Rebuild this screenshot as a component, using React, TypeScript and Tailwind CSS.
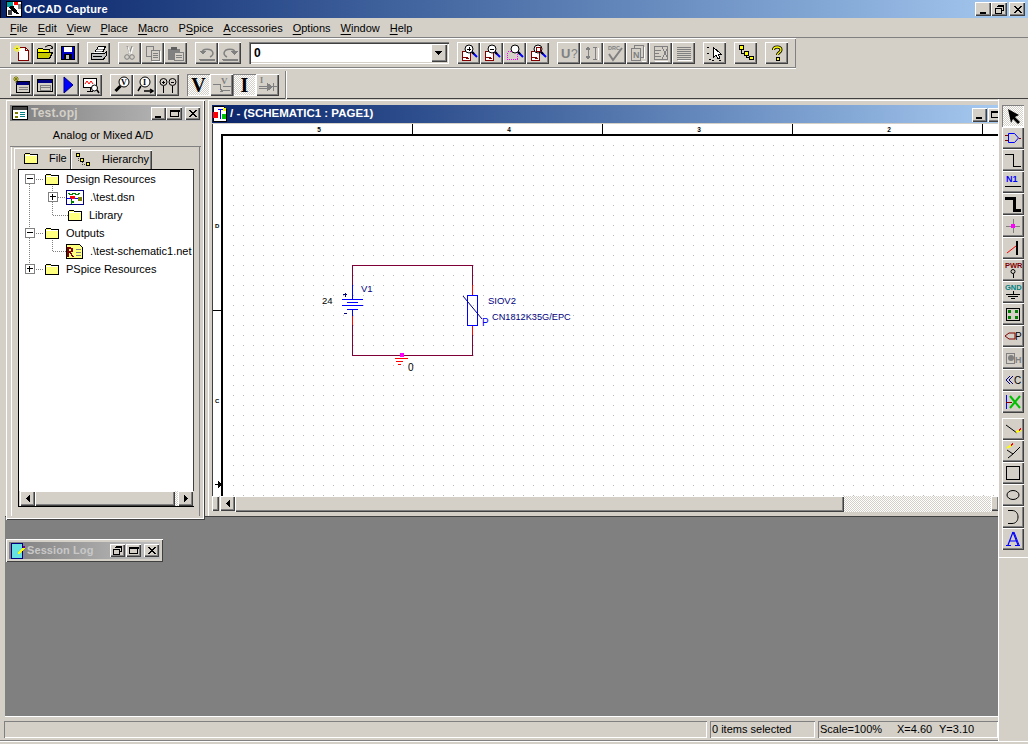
import React from "react";

const RAISED = "shadow-[inset_1px_1px_0_#ffffff,inset_-1px_-1px_0_#404040,inset_-2px_-2px_0_#808080]";
const DITHER = "bg-[repeating-conic-gradient(#ffffff_0_25%,#d4d0c8_0_50%)] bg-size-[2px_2px]";

function S({ children, size = 18 }: { children: React.ReactNode; size?: number }) {
  return (
    <svg width={size} height={size} viewBox="0 0 18 18" shapeRendering="crispEdges" fill="none">
      {children}
    </svg>
  );
}

const T = ({ x, y, s = 8, c = "#000", w = 700, f = "Liberation Sans", a = "start", children }: any) => (
  <text x={x} y={y} fontSize={s} fill={c} fontWeight={w} fontFamily={f} textAnchor={a}>
    {children}
  </text>
);

const Lens = ({ x = 7, y = 3, c = "#fff" }: any) => (
  <g>
    <circle cx={x + 4} cy={y + 4} r={4} fill={c} stroke="#000" shapeRendering="auto" />
    <path d={`M${x + 7} ${y + 7}l5 5`} stroke="#0000ff" strokeWidth={2} shapeRendering="auto" />
    <path d={`M${x + 7} ${y + 7}l2 2`} stroke="#000" strokeWidth={2} shapeRendering="auto" />
  </g>
);

const ZoomPage = ({ children }: any) => (
  <S>
    <path d="M2.5 7.5h8v9h-8z" fill="#fff" stroke="#800000" strokeWidth={1.5} />
    <path d="M3 13h5M6 14h3" stroke="#800000" />
    {children}
  </S>
);

const icons: Record<string, React.ReactNode> = {
  new: (
    <S>
      <path d="M6.5 3.5h6l3 3v10h-10v-9" fill="#fff" stroke="#800000" />
      <path d="M12.5 3.5v3h3" stroke="#800000" />
      <path d="M4 1v7M0.5 4.5h7M1.5 2l5 5M6.5 2l-5 5" stroke="#ffff00" strokeWidth={1} shapeRendering="auto" />
      <path d="M3 4h2v1H3z" fill="#808000" />
    </S>
  ),
  open: (
    <S>
      <path d="M1.5 5.5l1-1h4l1 1h6v3h-12z" fill="#ffff00" stroke="#000" />
      <path d="M1.5 14.5v-6h13l2 0-3 6z" fill="#c8c800" stroke="#000" />
      <path d="M9 3l3-1.5 3 0 1.5 2.5M16.5 2.5v2h-2" stroke="#000" shapeRendering="auto" />
    </S>
  ),
  save: (
    <S>
      <path d="M2.5 2.5h13v13h-13z" fill="#0000c0" stroke="#000" />
      <path d="M5 3h8v5H5z" fill="#fff" />
      <path d="M5 10h8v5H5z" fill="#000" />
      <path d="M7 11h3v4H7z" fill="#c0c0c0" />
    </S>
  ),
  print: (
    <S>
      <path d="M4.5 8.5l4-6h7l-3 6" fill="#fff" stroke="#000" />
      <path d="M7 5h6M6 7h6" stroke="#808080" />
      <path d="M1.5 9.5h13l2-2v4l-3 3.500h-12z" fill="#c0c0c0" stroke="#000" />
      <path d="M3 12h9" stroke="#000" />
    </S>
  ),
  cut: (
    <S>
      <path d="M6 2l3 8M11 2l-3 8" stroke="#808080" shapeRendering="auto" />
      <circle cx={6} cy={13} r={2.3} stroke="#808080" shapeRendering="auto" />
      <circle cx={11} cy={13} r={2.3} stroke="#808080" shapeRendering="auto" />
      <path d="M7 3l2 7M12 3l-2 7" stroke="#fff" shapeRendering="auto" />
    </S>
  ),
  copy: (
    <S>
      <path d="M2.500 2.500h7v10h-7z" stroke="#808080" />
      <path d="M7.500 6.500h8v10h-8z" fill="#d4d0c8" stroke="#808080" />
      <path d="M9 9h5M9 11h5M9 13h5" stroke="#808080" />
      <path d="M16.500 7v10H8" stroke="#fff" />
    </S>
  ),
  paste: (
    <S>
      <path d="M1 5h12v11H1z" fill="#808080" />
      <path d="M4 3h6v3H4z" fill="#606060" />
      <path d="M7.500 8.500h9v8h-9z" fill="#d4d0c8" stroke="#808080" />
      <path d="M9 11h6M9 13h6" stroke="#808080" />
    </S>
  ),
  undo: (
    <S>
      <path d="M1 15h16M2 16h15" stroke="#808080" />
      <path d="M4 9c0-5 10-5 11 0 0 1-1 3-3 4" stroke="#808080" strokeWidth={1.4} shapeRendering="auto" />
      <path d="M1 7l4 4 3-4z" fill="#808080" />
    </S>
  ),
  redo: (
    <S>
      <path d="M1 15h16M2 16h15" stroke="#808080" />
      <path d="M14 9c0-5-10-5-11 0 0 1 1 3 3 4" stroke="#808080" strokeWidth={1.4} shapeRendering="auto" />
      <path d="M17 7l-4 4-3-4z" fill="#808080" />
    </S>
  ),
  zin: (
    <ZoomPage>
      <Lens x={5} y={1} />
      <path d="M7 5h4M9 3v4" stroke="#000" />
    </ZoomPage>
  ),
  zout: (
    <ZoomPage>
      <Lens x={5} y={1} />
      <path d="M7 5h4" stroke="#000" />
    </ZoomPage>
  ),
  zarea: (
    <S>
      <path d="M1.500 7.500h10v8h-10z" stroke="#ff00ff" strokeDasharray="1 1" />
      <Lens x={5} y={1} />
    </S>
  ),
  zall: (
    <ZoomPage>
      <Lens x={5} y={1} />
      <path d="M7 3h4v4H7z" stroke="#800000" />
    </ZoomPage>
  ),
  u: (
    <S>
      <T x={1} y={14} s={13} c="#808080">U</T>
      <T x={11} y={14} s={12} c="#808080" w={400}>?</T>
    </S>
  ),
  arrows: (
    <S>
      <path d="M5 4v10M3 6l2-3 2 3M3 12l2 3 2-3z" stroke="#808080" fill="#808080" />
      <path d="M10 3h4M12 3v12M10 15h4" stroke="#808080" />
      <path d="M15 4v12" stroke="#fff" />
    </S>
  ),
  drc: (
    <S>
      <T x={2} y={6} s={5.500} c="#808080">DRC</T>
      <path d="M3 10l4 6 9-12" stroke="#808080" strokeWidth={2} shapeRendering="auto" />
    </S>
  ),
  net: (
    <S>
      <path d="M5.500 1.500h9v12h-9z" stroke="#808080" />
      <path d="M2.500 4.500h9v12h-9z" fill="#d4d0c8" stroke="#808080" />
      <T x={4} y={14} s={9} c="#808080">N</T>
      <path d="M15.500 3v12M12.500 17h4" stroke="#fff" />
    </S>
  ),
  xl: (
    <S>
      <path d="M2.500 2.500h13v13h-13z" stroke="#808080" />
      <path d="M3 6h6M3 9h4M3 12h6M10 3l6 12M16 3l-6 12" stroke="#808080" />
      <path d="M3 17h13" stroke="#fff" />
    </S>
  ),
  list: (
    <S>
      <path d="M2 3h14M2 5h14M2 7h14M2 9h14M2 11h14M2 13h14M2 15h14" stroke="#808080" />
      <path d="M3 16h14" stroke="#fff" />
    </S>
  ),
  sel: (
    <S>
      <path d="M7.500 3.500v10l2.500-2.500 2 4 2-1-2-4h3z" fill="#fff" stroke="#000" />
      <path d="M1 3h2M1 9h2M3 15h2M6 16h2M13 16h2" stroke="#000" />
    </S>
  ),
  tree: (
    <S>
      <path d="M4 4v5h5M9 9v4h5" stroke="#000" />
      <path d="M2.500 1.500h4v4h-4zM7.500 7.500h4v4h-4zM12.500 12.500h4v3h-4z" fill="#ffff00" stroke="#000" />
    </S>
  ),
  help: (
    <S>
      <path d="M5.500 6c0-4 7.500-4 7.500 0 0 2.500-3.500 2.500-3.500 5" stroke="#000" strokeWidth={3} shapeRendering="auto" />
      <path d="M5.500 6c0-4 7.500-4 7.500 0 0 2.500-3.500 2.500-3.500 5" stroke="#ffff00" strokeWidth={1.300} shapeRendering="auto" />
      <path d="M8 13.500h3v3H8z" fill="#ffff00" stroke="#000" />
    </S>
  ),
  win1: (
    <S>
      <path d="M3.500 5.500h13v11h-13z" fill="#d4d0c8" stroke="#000" />
      <path d="M4 6h12v3H4z" fill="#000080" />
      <path d="M6 11h9M6 13h9" stroke="#808080" />
      <path d="M3 0v7M0 3h6M1 1l4 4M5 1l-4 4" stroke="#808000" shapeRendering="auto" />
    </S>
  ),
  win2: (
    <S>
      <path d="M1.500 3.500h15v12h-15z" fill="#d4d0c8" stroke="#000" />
      <path d="M2 4h14v3H2z" fill="#000080" />
      <path d="M4 9h10v5H4z" stroke="#808080" />
      <path d="M4 11h10" stroke="#808080" />
    </S>
  ),
  run: (
    <S>
      <path d="M5 1l9 8-9 8z" fill="#0000ff" stroke="#000080" shapeRendering="auto" />
    </S>
  ),
  probe: (
    <S>
      <path d="M1.500 2.500h13v9h-13z" fill="#fff" stroke="#000" />
      <path d="M3 8l2-3 2 3 2-3 2 3" stroke="#ff0000" shapeRendering="auto" />
      <path d="M8 11v4M5 15h6" stroke="#000" />
      <circle cx={12.500} cy={12} r={3} fill="#fff" stroke="#000" shapeRendering="auto" />
      <path d="M15 14l2 3" stroke="#000" strokeWidth={1.500} shapeRendering="auto" />
    </S>
  ),
  vmark: (
    <S>
      <circle cx={11} cy={6} r={5} fill="#fff" stroke="#000" shapeRendering="auto" />
      <T x={8} y={9} s={8} f="Liberation Serif">V</T>
      <path d="M7.500 10l-5 5" stroke="#000" strokeWidth={3} shapeRendering="auto" />
    </S>
  ),
  imark: (
    <S>
      <circle cx={9} cy={6} r={5} fill="#fff" stroke="#000" shapeRendering="auto" />
      <T x={7} y={9} s={8} f="Liberation Serif">I</T>
      <path d="M5 10l-3 5M8 15h8M14 13l3 2-3 2" stroke="#000" strokeWidth={1.500} shapeRendering="auto" />
    </S>
  ),
  diff: (
    <S>
      <circle cx={4.500} cy={6} r={3.500} stroke="#000" shapeRendering="auto" />
      <circle cx={13.500} cy={6} r={3.500} stroke="#000" shapeRendering="auto" />
      <path d="M3 6h3M4.500 4.500v3M12 6h3M4.500 10v7M13.500 10v7" stroke="#000" />
    </S>
  ),
  V: (
    <span className="text-[20px] font-bold leading-none font-['Liberation_Serif',serif] text-black">V</span>
  ),
  Vd: (
    <S>
      <T x={8} y={8} s={9} c="#808080" f="Liberation Serif">V</T>
      <path d="M0 8h7v5h2M7 8v6M10 10h8M9 14h8" stroke="#808080" />
      <path d="M6 16h4l-2-2z" fill="#808080" />
    </S>
  ),
  I: (
    <span className="text-[20px] font-bold leading-none font-['Liberation_Serif',serif] text-black">I</span>
  ),
  Id: (
    <S>
      <T x={1} y={7} s={8} c="#808080" f="Liberation Serif">I</T>
      <path d="M0 10h18M0 12h8" stroke="#808080" />
      <path d="M8 7l5 4-5 4zM14 7v8" fill="#808080" stroke="#808080" />
    </S>
  ),
  pointer: (
    <S>
      <path d="M4 2l11 6-4 2 5 5-2 2-5-5-2 4z" fill="#000" shapeRendering="auto" />
    </S>
  ),
  part: (
    <S>
      <path d="M4.500 4.500h6l4 4.500-4 4.500h-6z" stroke="#0000ff" shapeRendering="auto" />
      <path d="M1 6.500h3M1 11.500h3M14.500 9H17" stroke="#800000" />
    </S>
  ),
  wire: (
    <S>
      <path d="M1 3.500h8.500v12H17" stroke="#000" />
    </S>
  ),
  n1: (
    <S>
      <T x={2} y={9} s={9} c="#0000ff">N1</T>
      <path d="M1 13h16" stroke="#000" />
    </S>
  ),
  bus: (
    <S>
      <path d="M1 3h9v12h7" stroke="#000" strokeWidth={3} />
    </S>
  ),
  junction: (
    <S>
      <path d="M2 9h14M9 2v14" stroke="#808080" />
      <path d="M7 7h4v4H7z" fill="#ff00ff" />
    </S>
  ),
  entry: (
    <S>
      <path d="M13 2v14" stroke="#000" strokeWidth={2} />
      <path d="M3 14l9-7" stroke="#ff0000" shapeRendering="auto" />
    </S>
  ),
  pwr: (
    <S>
      <T x={1} y={7} s={7.500} c="#800000">PWR</T>
      <circle cx={9} cy={10.500} r={2} stroke="#000" shapeRendering="auto" />
      <path d="M9 13v4" stroke="#000" />
    </S>
  ),
  gnd: (
    <S>
      <T x={1} y={7} s={7.500} c="#008080">GND</T>
      <path d="M9 8v3M2 11h14M4 13h10M7 15h4" stroke="#000" />
    </S>
  ),
  block: (
    <S>
      <path d="M2.500 3.500h13v12h-13z" stroke="#000" />
      <path d="M4 5h3v3H4zM11 5h3v3h-3zM4 11h3v3H4zM11 11h3v3h-3z" fill="#008000" />
    </S>
  ),
  port: (
    <S>
      <path d="M1 9l4-3h6v6H5z" stroke="#800000" shapeRendering="auto" />
      <T x={11} y={13} s={10} c="#000" w={400}>P</T>
    </S>
  ),
  hier: (
    <S>
      <path d="M2 4h8v10H2z" stroke="#808080" />
      <circle cx={7} cy={9} r={3} fill="#808080" shapeRendering="auto" />
      <T x={11} y={14} s={9} c="#808080">H</T>
    </S>
  ),
  offpage: (
    <S>
      <path d="M6 5L2 9l4 4M9 5L5 9l4 4" stroke="#000080" shapeRendering="auto" />
      <T x={10} y={13} s={10} c="#000" w={400}>C</T>
    </S>
  ),
  nc: (
    <S>
      <path d="M2 2v14" stroke="#0000ff" />
      <path d="M2 9h6" stroke="#800000" />
      <path d="M6 3l10 12M16 3L6 15" stroke="#00c000" strokeWidth={2} shapeRendering="auto" />
    </S>
  ),
  line: (
    <S>
      <path d="M2 5l11 8" stroke="#000" shapeRendering="auto" />
      <path d="M12 12l5-2" stroke="#ffff00" strokeWidth={2} shapeRendering="auto" />
      <path d="M15 10l2-1" stroke="#ff0000" strokeWidth={2} />
    </S>
  ),
  poly: (
    <S>
      <path d="M3 8l6 4-5 4M9 12l7-7" stroke="#000" shapeRendering="auto" />
      <path d="M3 6l5-3" stroke="#ffff00" strokeWidth={2} shapeRendering="auto" />
      <path d="M7 3l2-1" stroke="#ff0000" strokeWidth={2} />
    </S>
  ),
  rect: (
    <S>
      <path d="M2.500 2.500h13v13h-13z" stroke="#000" />
    </S>
  ),
  ellipse: (
    <S>
      <ellipse cx={9} cy={9} rx={6} ry={4.500} stroke="#000" shapeRendering="auto" />
    </S>
  ),
  arc: (
    <S>
      <path d="M4 2.500h4c4 0 6 3 6 6.500s-2 6.500-6 6.500H4" stroke="#000" shapeRendering="auto" />
    </S>
  ),
  A: (
    <S>
      <path d="M9 2l-5 13M9 2l5 13M6 11h6M2 15.500h5M11 15.500h5" stroke="#0000ff" strokeWidth={1.200} shapeRendering="auto" />
      <path d="M10 2l5 13" stroke="#0000ff" shapeRendering="auto" />
    </S>
  ),
};

function Btn({ i, checked, w = "w-[23px]" }: { i: string; checked?: boolean; w?: string }) {
  return (
    <div
      className={
        w +
        " h-[22px] flex items-center justify-center shrink-0 " +
        (checked ? "shadow-[inset_1px_1px_0_#808080,inset_-1px_-1px_0_#ffffff] " + DITHER : RAISED)
      }
    >
      {icons[i]}
    </div>
  );
}

function Group({ items, checked = [] }: { items: string[]; checked?: string[] }) {
  return (
    <div className="flex">
      {items.map((k) => (
        <Btn key={k} i={k} checked={checked.includes(k)} />
      ))}
    </div>
  );
}

function Menu({ label, u = 0 }: { label: string; u?: number }) {
  return (
    <span>
      {label.slice(0, u)}
      <span className="underline underline-offset-2">{label[u]}</span>
      {label.slice(u + 1)}
    </span>
  );
}

function CapBtn({ kind, w = "w-[15px]", h = "h-[13px]" }: { kind: string; w?: string; h?: string }) {
  return (
    <div className={w + " " + h + " flex items-center justify-center bg-[#d4d0c8] shrink-0 " + RAISED}>
      <svg width="11" height="9" viewBox="0 0 11 9" shapeRendering="crispEdges" fill="none">
        {kind === "min" && <path d="M2 7h6v1.500H2z" fill="#000" />}
        {kind === "max" && <path d="M1.500 1.500h8v6h-8zM1 1h9v1H1z" stroke="#000" />}
        {kind === "close" && <path d="M2 1l7 7M3 1l7 7M9 1L2 8M10 1L3 8" stroke="#000" shapeRendering="auto" />}
        {kind === "restore" && <path d="M3.500 .5h6v5h-2M1.500 3.500h6v5h-6zM3 1h7M1 3h7" stroke="#000" />}
      </svg>
    </div>
  );
}

function Folder() {
  return (
    <svg width="16" height="13" viewBox="0 0 16 13" shapeRendering="crispEdges" className="shrink-0">
      <path d="M1.500 2.500l1-1.500h4l1 1.500h7v9h-13z" fill="#ffff80" stroke="#000" />
      <path d="M2 3h12" stroke="#fff" />
    </svg>
  );
}

function TreeBox({ plus }: { plus?: boolean }) {
  return (
    <svg width="10" height="10" viewBox="0 0 10 10" shapeRendering="crispEdges" className="shrink-0 bg-white">
      <path d="M.5.5h9v9h-9z" stroke="#808080" fill="#fff" />
      <path d="M2 4.500h6" stroke="#000" />
      {plus && <path d="M4.500 2v6" stroke="#000" />}
    </svg>
  );
}

function ScrollArrow({ dir }: { dir: "l" | "r" }) {
  return (
    <div className={"w-[15px] h-[15px] flex items-center justify-center shrink-0 " + RAISED}>
      <svg width="6" height="9" viewBox="0 0 6 9" shapeRendering="crispEdges">
        <path d={dir === "l" ? "M5 0v9L1 4.500z" : "M1 0v9l4-4.500z"} fill="#000" />
      </svg>
    </div>
  );
}

function ProjectWindow() {
  return (
    <div className="w-[199px] h-[420px] shrink-0 z-10 bg-[#d4d0c8] flex flex-col px-[4px] pt-[5px] pb-[4px] shadow-[inset_1px_1px_0_#ffffff,inset_-1px_-1px_0_#404040,inset_-2px_-2px_0_#ffffff]">
      <div className="h-[16px] flex items-center bg-linear-to-r from-[#808080] to-[#c0c0c0] shrink-0">
        <svg width="16" height="14" viewBox="0 0 16 14" shapeRendering="crispEdges" className="ml-[2px] shrink-0">
          <path d="M.5.5h15v13H.5z" fill="#fff" stroke="#000" />
          <path d="M1 1h14v3H1z" fill="#404040" />
          <path d="M3 6h3v2H3zM3 10h3v2H3z" fill="#808000" />
          <path d="M8 6h5M8 8h5M8 10h5" stroke="#008080" />
        </svg>
        <span className="ml-[3px] text-[12px] font-bold text-[#d4d0c8] flex-1 tracking-[0.2px]">Test.opj</span>
        <CapBtn kind="min" />
        <CapBtn kind="max" w="w-[16px]" />
        <div className="w-[3px]" />
        <CapBtn kind="close" />
        <div className="w-[1px]" />
      </div>
      <div className="h-[23px] flex items-center justify-center text-[11px] text-black shrink-0 mt-[3px] pr-[5px] shadow-[inset_0_-1px_0_#808080]">
        Analog or Mixed A/D
      </div>
      <div className="flex-1 min-h-0 flex flex-col mx-[1px] shadow-[inset_-1px_0_0_#808080,inset_1px_0_0_#ffffff]">
        <div className="h-[22px] flex items-end pl-[3px] shrink-0">
          <div className="w-[57px] h-[21px] flex items-center pl-[9px] gap-[10px] text-[11px] shadow-[inset_1px_1px_0_#ffffff,inset_-1px_0_0_#404040]">
            <Folder />
            <span>File</span>
          </div>
          <div className="w-[81px] h-[19px] flex items-center pl-[5px] gap-[10px] text-[11px] shadow-[inset_1px_1px_0_#ffffff,inset_-1px_0_0_#404040,inset_-2px_0_0_#808080]">
            <svg width="16" height="13" viewBox="0 0 16 13" shapeRendering="crispEdges" className="shrink-0">
              <path d="M2 3v4h4M6 7v4h4" stroke="#404040" strokeDasharray="1 1" fill="none" />
              <path d="M.5.5h3v3h-3zM4.500 5.500h3v3h-3zM10.500 9.500h3v3h-3z" fill="#ffff00" stroke="#000" />
            </svg>
            <span>Hierarchy</span>
          </div>
        </div>
        <div className="relative flex-1 min-h-0 ml-[7px] mr-[6px] mb-[9px] bg-white border-t border-l border-b border-black shadow-[inset_-1px_0_0_#404040] flex flex-col overflow-hidden">
          <svg width="175" height="110" className="absolute left-0 top-0" shapeRendering="crispEdges" fill="none">
            <path
              d="M10.500 14v80M15 9.500h10M15 63.500h10M15 99.500h10M33.500 14v31M39 27.500h8M33.500 45.500h15M33.500 68v13.500h14"
              stroke="#808080"
              strokeDasharray="1 1"
            />
          </svg>
          <div className="flex-1 min-h-0 text-[11px] text-black relative overflow-hidden whitespace-nowrap">
            <div className="flex items-center h-[18px] pl-[6px]">
              <TreeBox />
              <div className="w-[9px]" />
              <Folder />
              <span className="ml-[6px]">Design Resources</span>
            </div>
            <div className="flex items-center h-[18px] pl-[29px]">
              <TreeBox plus />
              <div className="w-[8px]" />
              <svg width="18" height="15" viewBox="0 0 18 15" shapeRendering="crispEdges" className="shrink-0">
                <path d="M.5.5h17v14H.5z" fill="#fff" stroke="#000080" />
                <path d="M2 3l3 2 3-2 3 2 3-2" stroke="#008000" fill="none" />
                <path d="M4 6h5v3H4z" fill="#ff0000" />
                <path d="M1 8h4M9 8h4M5 9v4" stroke="#0000ff" />
                <path d="M12 7h4v4h-4z" fill="#808000" />
                <path d="M5 10v4l4-2z" fill="#008000" />
              </svg>
              <span className="ml-[6px]">.\test.dsn</span>
            </div>
            <div className="flex items-center h-[18px] pl-[48px]">
              <Folder />
              <span className="ml-[6px]">Library</span>
            </div>
            <div className="flex items-center h-[18px] pl-[6px]">
              <TreeBox />
              <div className="w-[9px]" />
              <Folder />
              <span className="ml-[6px]">Outputs</span>
            </div>
            <div className="flex items-center h-[18px] pl-[47px]">
              <svg width="18" height="15" viewBox="0 0 18 15" shapeRendering="crispEdges" className="shrink-0">
                <path d="M.5.5h13l3 3v11H.5z" fill="#ffff80" stroke="#000" />
                <path d="M2 4h2c3 0 3 4 0 4h-2zM2 4v9M4 8l3 5" stroke="#800000" strokeWidth={1.500} fill="none" />
                <path d="M10 5h5M10 8h5M10 11h5" stroke="#808080" />
              </svg>
              <span className="ml-[6px]">.\test-schematic1.net</span>
            </div>
            <div className="flex items-center h-[18px] pl-[6px]">
              <TreeBox plus />
              <div className="w-[9px]" />
              <Folder />
              <span className="ml-[6px]">PSpice Resources</span>
            </div>
          </div>
          <div className="h-[15px] flex shrink-0 bg-[#d4d0c8] px-[1px]">
            <ScrollArrow dir="l" />
            <div className={"w-[140px] h-[15px] shrink-0 " + RAISED} />
            <div className={"flex-1 " + DITHER} />
            <ScrollArrow dir="r" />
          </div>
        </div>
      </div>
    </div>
  );
}

function Schematic() {
  const wire = "#7f0037";
  const blue = "#0000ff";
  const red = "#ff0000";
  const dots = "dotgrid";
  return (
    <svg width="786" height="372" viewBox="212 124 786 372" className="block shrink-0" shapeRendering="crispEdges" fill="none">
      <defs>
        <pattern id={dots} x="213" y="125" width="10" height="10" patternUnits="userSpaceOnUse">
          <rect x="0" y="0" width="1" height="1" fill="#b8b8b8" />
        </pattern>
      </defs>
      <rect x="212" y="124" width="786" height="372" fill="#fff" />
      <rect x="224" y="136" width="774" height="360" fill={`url(#${dots})`} />
      <path d="M222 135h776M222.500 134v362M221.500 134v362M222 134h776" stroke="#000" />
      <path d="M412.500 124v10M602.500 124v10M792.500 124v10M982.500 124v10M212 310.500h10" stroke="#000" />
      <path d="M212.500 124v372" stroke="#404040" />
      <path d="M215 484.500h6" stroke="#000" />
      <path d="M218 481l4 3.500-4 3.500z" fill="#000" />
      {[["5", 319], ["4", 509], ["3", 699], ["2", 889]].map(([t, x]) => (
        <T key={t as string} x={x} y={132} s={6.500} a="middle">{t}</T>
      ))}
      <T x={215} y={228} s={6}>D</T>
      <T x={215} y={403} s={6}>C</T>

      <path d="M352.500 285V265.500H472.500V285M472.500 335V355.500H352.500V325" stroke={wire} />
      <path d="M352.500 316v9M472.500 285v10M472.500 326v9" stroke={red} />
      <path d="M352.500 285v14M352.500 309v7M342 299.500h21M347 302.500h11M342 305.500h21M347 309.500h11" stroke={blue} />
      <path d="M343 294.500h4M345 292.500v4M344 313.500h3" stroke="#000080" />
      <path d="M467.500 295.500h10v30h-10z" stroke={blue} />
      <path d="M463 296l19 23" stroke="#000080" shapeRendering="auto" />
      <path d="M398 358.500h13M399 361.500h7M401 364.500h3" stroke={red} transform="translate(-3 0)" />
      <rect x="400" y="353" width="4" height="4" fill="#ff00ff" />

      <T x={361} y={292} s={9.500} c="#000080" w={400}>V1</T>
      <T x={322} y={304} s={9.500} c="#000" w={400}>24</T>
      <T x={482} y={326} s={10} c="#0000ff" w={400}>P</T>
      <T x={488} y={304} s={9.500} c="#000080" w={400}>SIOV2</T>
      <T x={492} y={320} s={9.200} c="#000080" w={400}>CN1812K35G/EPC</T>
      <T x={408} y={371} s={10} c="#000" w={400}>0</T>
    </svg>
  );
}

function SchematicWindow() {
  return (
    <div className="w-[790px] h-[416px] shrink-0 bg-[#d4d0c8] flex flex-col pl-[4px] pt-[5px] overflow-hidden shadow-[inset_1px_1px_0_#ffffff]">
      <div className="h-[18px] w-[790px] flex items-center shrink-0 bg-linear-to-r from-[#0a246a] to-[#a6caf0]">
        <svg width="16" height="16" viewBox="0 0 16 16" shapeRendering="crispEdges" className="shrink-0">
          <path d="M1.500.5h10l3 3v12h-13z" fill="#fff" stroke="#000" />
          <path d="M1 6h5v6H1z" fill="#ff0000" />
          <path d="M6 3h5M8 3v10" stroke="#0000ff" />
          <path d="M10 8h4v5h-4z" fill="#00c000" />
          <path d="M11 2h3v3h-3z" fill="#ffff00" />
        </svg>
        <span className="ml-[2px] w-[742px] shrink-0 whitespace-nowrap text-[11.500px] font-bold text-white">/ - (SCHEMATIC1 : PAGE1)</span>
        <div className="flex gap-[1px] shrink-0 pt-[1px]">
          <CapBtn kind="min" h="h-[14px]" />
          <CapBtn kind="max" h="h-[14px]" />
        </div>
      </div>
      <div className="h-[1px] shrink-0" />
      <Schematic />
      <div className="h-[16px] flex shrink-0 items-start">
        <div className={"w-[7px] h-[15px] shrink-0 " + RAISED} />
        <div className="w-[1px] h-[15px] bg-black mr-[1px]" />
        <ScrollArrow dir="l" />
        <div className={"w-[609px] h-[16px] shrink-0 " + RAISED} />
        <div className={"w-[147px] h-[16px] shrink-0 " + DITHER} />
        <div className={"w-[8px] h-[15px] shrink-0 " + RAISED} />
      </div>
    </div>
  );
}

function RightBar() {
  const a = ["pointer", "part", "wire", "n1", "bus", "junction", "entry", "pwr", "gnd", "block", "port", "hier", "offpage", "nc"];
  const b = ["line", "poly", "rect", "ellipse", "arc", "A"];
  return (
    <div className="w-[30px] shrink-0 flex flex-col shadow-[inset_1px_0_0_#ffffff]">
      <div className="pt-[6px] pb-[7px] flex flex-col items-center">
        {a.map((k) => (
          <Btn key={k} i={k} w="w-[22px]" checked={k === "pointer"} />
        ))}
        <div className="h-[5px]" />
        {b.map((k) => (
          <Btn key={k} i={k} w="w-[22px]" />
        ))}
      </div>
      <div className="h-[1px] bg-white" />
    </div>
  );
}

export default function App() {
  return (
    <div className="w-[1028px] h-[744px] overflow-hidden flex flex-col bg-[#d4d0c8] text-black font-['Liberation_Sans',Arial,sans-serif] select-none">
      <div className="h-[18px] shrink-0 flex items-center bg-linear-to-r from-[#0a246a] to-[#a6caf0] shadow-[inset_1px_0_0_#000000]">
        <svg width="16" height="16" viewBox="0 0 16 16" shapeRendering="crispEdges" className="ml-[6px] shrink-0">
          <path d="M.5.5h15v15H.5z" fill="#fff" stroke="#000" />
          <path d="M1 1h6v5H1z" fill="#00a0a0" />
          <path d="M8 1h4v3H8z" fill="#ff0000" />
          <path d="M12 3h3v5h-3z" fill="#808080" />
          <path d="M4 6l6 6M6 5l6 8" stroke="#000" strokeWidth={2} />
          <path d="M2 9h4v5H2z" fill="#404040" />
        </svg>
        <span className="ml-[2px] text-[11px] font-bold text-white tracking-[0.2px]">OrCAD Capture</span>
        <div className="ml-auto flex items-center mr-[3px]">
          <CapBtn kind="min" w="w-[16px]" h="h-[14px]" />
          <CapBtn kind="restore" w="w-[16px]" h="h-[14px]" />
          <div className="w-[2px]" />
          <CapBtn kind="close" w="w-[16px]" h="h-[14px]" />
        </div>
      </div>

      <div className="h-[20px] shrink-0 flex items-center gap-[10px] pl-[10px] text-[11px] shadow-[inset_0_-1px_0_#808080]">
        <Menu label="File" />
        <Menu label="Edit" />
        <Menu label="View" />
        <Menu label="Place" />
        <Menu label="Macro" />
        <Menu label="PSpice" u={1} />
        <Menu label="Accessories" />
        <Menu label="Options" />
        <Menu label="Window" />
        <Menu label="Help" />
      </div>

      <div className="h-[31px] w-[796px] shrink-0 flex items-center gap-[8px] pl-[10px] pb-[2px] shadow-[inset_0_1px_0_#ffffff,inset_0_-1px_0_#ffffff,inset_0_-2px_0_#808080,inset_-1px_0_0_#808080]">
        <Group items={["new", "open", "save"]} />
        <Group items={["print"]} />
        <Group items={["cut", "copy", "paste"]} />
        <Group items={["undo", "redo"]} />
        <div className="w-[200px] h-[22px] flex items-center bg-white shrink-0 shadow-[inset_1px_1px_0_#808080,inset_2px_2px_0_#404040,inset_-1px_-1px_0_#ffffff,inset_-2px_-2px_0_#d4d0c8]">
          <span className="pl-[5px] text-[12px] font-bold flex-1">0</span>
          <div className={"w-[16px] h-[18px] mr-[2px] flex items-center justify-center bg-[#d4d0c8] " + RAISED}>
            <svg width="8" height="4" viewBox="0 0 8 4" shapeRendering="crispEdges">
              <path d="M0 0h7L3.500 4z" fill="#000" />
            </svg>
          </div>
        </div>
        <Group items={["zin", "zout", "zarea", "zall"]} />
        <Group items={["u", "arrows", "drc", "net", "xl", "list"]} />
        <Group items={["sel"]} />
        <Group items={["tree"]} />
        <Group items={["help"]} />
      </div>

      <div className="h-[30px] shrink-0 flex items-center gap-[8px] pl-[10px] pt-[2px] shadow-[inset_0_-1px_0_#404040]">
        <Group items={["win1", "win2", "run", "probe"]} />
        <Group items={["vmark", "imark", "diff"]} />
        <Group items={["V", "Vd", "I", "Id"]} checked={["V", "I"]} />
        <div className="w-[2px] h-[28px] ml-[-2px] shadow-[inset_1px_0_0_#808080,inset_-1px_0_0_#ffffff]" />
      </div>

      <div className="flex-1 min-h-0 flex">
        <div className="w-[998px] shrink-0 flex flex-col">
          <div className="flex-1 min-h-0 flex flex-col">
            <div className="h-[417px] shrink-0 flex items-start pl-[6px] pt-[1px] gap-[3px]">
              <ProjectWindow />
              <SchematicWindow />
            </div>
            <div className="flex-1 min-h-0 relative ml-[5px] bg-[#808080] border-t border-[#404040] shadow-[inset_0_-1px_0_#ffffff]">
              <div className="absolute left-[1px] top-[22px] w-[157px] h-[23px] bg-[#d4d0c8] flex items-center px-[3px] shadow-[inset_1px_1px_0_#ffffff,inset_-1px_-1px_0_#404040]">
                <div className="flex-1 h-[17px] flex items-center bg-linear-to-r from-[#808080] to-[#c0c0c0]">
                  <svg width="14" height="16" viewBox="0 0 14 16" shapeRendering="crispEdges" className="ml-[2px] shrink-0">
                    <path d="M.5.5h11v15H.5z" fill="#66e0e0" stroke="#000080" />
                    <path d="M6 10l6-6 2 1-6 6z" fill="#ffff00" />
                    <path d="M12 3h2v2h-2z" fill="#800080" />
                  </svg>
                  <span className="ml-[2px] text-[11px] font-bold text-[#c8c8c8] flex-1 tracking-[0.1px]">Session Log</span>
                  <CapBtn kind="restore" />
                  <div className="w-[1px]" />
                  <CapBtn kind="max" />
                  <div className="w-[3px]" />
                  <CapBtn kind="close" />
                  <div className="w-[1px]" />
                </div>
              </div>
            </div>
          </div>
          <div className="h-[24px] shrink-0 flex items-center text-[11px] pl-[4px] gap-[3px] pt-[1px] shadow-[inset_0_-1px_0_#808080]">
            <div className="w-[703px] h-[17px] shadow-[inset_1px_1px_0_#808080,inset_-1px_-1px_0_#ffffff]" />
            <div className="w-[105px] h-[17px] pl-[2px] flex items-center shadow-[inset_1px_1px_0_#808080,inset_-1px_-1px_0_#ffffff]">
              0 items selected
            </div>
            <div className="w-[180px] h-[17px] pl-[2px] flex items-center shadow-[inset_1px_1px_0_#808080,inset_-1px_-1px_0_#ffffff]">
              <span className="w-[77px]">Scale=100%</span>
              <span className="w-[42px]">X=4.60</span>
              <span>Y=3.10</span>
            </div>
          </div>
        </div>
        <RightBar />
      </div>
      <div className="h-[3px] shrink-0 shadow-[inset_0_1px_0_#ffffff]" />
    </div>
  );
}
